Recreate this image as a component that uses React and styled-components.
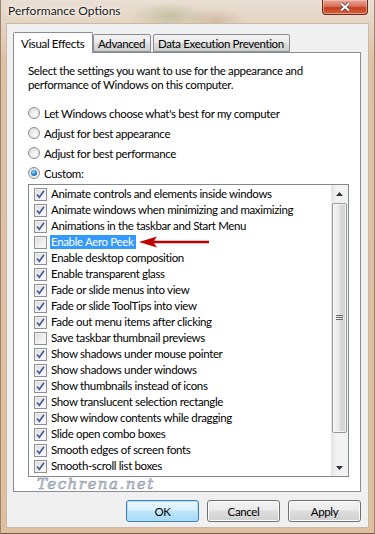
import React from 'react';
import styled, { createGlobalStyle } from 'styled-components';

const GlobalStyle = createGlobalStyle`
  html, body {
    margin: 0;
    padding: 0;
    background: #d8b898;
  }
  body {
    font-family: Lato, "Liberation Sans", sans-serif;
    font-size: 11.5px;
    letter-spacing: -0.35px;
    color: #000;
  }
  * { box-sizing: border-box; }
`;

const Window = styled.div`
  width: 375px;
  height: 534px;
  display: flex;
  flex-direction: column;
  padding: 0 7px 7px 7px;
  background:
    radial-gradient(ellipse 40px 14px at 170px 16px, rgba(120, 140, 80, 0.3), transparent),
    radial-gradient(ellipse 30px 12px at 215px 20px, rgba(150, 110, 70, 0.25), transparent),
    linear-gradient(180deg, #e9dfd3 0px, #e4d4c2 24px, #dfc2a5 60px, #e0bf9f 100%);
  box-shadow: inset 1px 0 0 #9a8470, inset -1px 0 0 #9a8470, inset 0 -1px 0 #6e5a48;
`;

const TitleBar = styled.div`
  height: 24px;
  display: flex;
  align-items: flex-start;
  justify-content: space-between;
`;

const Title = styled.div`
  margin-top: 3px;
  padding-left: 1px;
  font-size: 12px;
  letter-spacing: 0;
  line-height: 16px;
  color: #1a1a1a;
  text-shadow: 0 0 6px #fff, 0 0 3px #fff;
`;

const CloseButton = styled.div`
  width: 46px;
  height: 15px;
  display: flex;
  align-items: center;
  justify-content: center;
  border: 1px solid #6b2c22;
  border-top: none;
  border-radius: 0 0 4px 4px;
  background: linear-gradient(180deg, #e9a898 0%, #d9705a 45%, #c4401f 55%, #d7613e 100%);
  box-shadow: inset 0 0 0 1px rgba(255, 210, 200, 0.5);
`;

const Client = styled.div`
  flex: 1;
  display: flex;
  flex-direction: column;
  background: #f0f0f0;
  padding: 8px 0 0 6px;
  box-shadow: 0 0 0 1px #c9b9a6;
`;

const TabRow = styled.div`
  height: 20px;
  display: flex;
  align-items: flex-end;
  position: relative;
  z-index: 1;
`;

const Tab = styled.div`
  height: ${p => (p.$active ? '21px' : '18px')};
  width: ${p => p.$w}px;
  margin-right: ${p => p.$gap || 0}px;
  margin-bottom: ${p => (p.$active ? '-1px' : '0')};
  padding-top: ${p => (p.$active ? '3px' : '1px')};
  padding-left: ${p => (p.$active ? '7px' : '4px')};
  border: 1px solid #898c95;
  border-bottom: ${p => (p.$active ? 'none' : '1px solid #898c95')};
  border-radius: 2px 2px 0 0;
  background: ${p =>
    p.$active
      ? '#fff'
      : 'linear-gradient(180deg, #f2f2f2 0%, #ebebeb 45%, #dddddd 50%, #cfcfcf 100%)'};
  line-height: 15px;
  white-space: nowrap;
`;

const Panel = styled.div`
  width: 348px;
  height: 440px;
  border: 1px solid #898c95;
  background: #fff;
  display: flex;
  flex-direction: column;
  padding: 11px 0 0 14px;
`;

const Intro = styled.p`
  margin: 0;
  line-height: 14px;
  width: 300px;
`;

const RadioGroup = styled.div`
  margin-top: 11px;
  display: flex;
  flex-direction: column;
`;

const RadioRow = styled.div`
  height: 20px;
  display: flex;
  align-items: center;
  gap: 4px;
`;

const RadioDot = styled.span`
  width: 12px;
  height: 12px;
  border-radius: 50%;
  border: 1px solid #8e8f8f;
  background: radial-gradient(circle at 60% 65%, #fcfcfc 0%, #e6e6e6 55%, #cfcfcf 100%);
  display: flex;
  align-items: center;
  justify-content: center;
  &::after {
    content: '';
    width: 6px;
    height: 6px;
    border-radius: 50%;
    display: ${p => (p.$on ? 'block' : 'none')};
    background: radial-gradient(circle at 40% 35%, #a8dcff 0%, #2d8ad6 45%, #0c4f93 100%);
  }
`;

const ListBox = styled.div`
  margin-top: 1px;
  width: 321px;
  height: 293px;
  border: 1px solid #828790;
  display: flex;
  overflow: hidden;
`;

const Rows = styled.div`
  flex: 1;
  padding: 1px 0 0 5px;
  display: flex;
  flex-direction: column;
`;

const Row = styled.div`
  height: 16px;
  flex-shrink: 0;
  display: flex;
  align-items: center;
`;

const Box = styled.span`
  width: 13px;
  height: 13px;
  border: 1px solid #8e8f8f;
  background: linear-gradient(135deg, #d9d9d9 0%, #f1f1f1 60%, #fcfcfc 100%);
  box-shadow: inset 0 0 0 1px #f4f4f4;
  display: flex;
  align-items: center;
  justify-content: center;
  flex-shrink: 0;
`;

const Label = styled.span`
  margin-left: 3px;
  padding: 0 2px 0 1px;
  height: 14px;
  line-height: 14px;
  white-space: nowrap;
  background: ${p => (p.$selected ? '#3399ff' : 'transparent')};
  color: ${p => (p.$selected ? '#fff' : '#000')};
`;

const Arrow = styled.svg`
  margin-left: 3px;
  flex-shrink: 0;
`;

const ScrollBar = styled.div`
  width: 17px;
  display: flex;
  flex-direction: column;
  background: linear-gradient(90deg, #e3e3e3 0%, #f2f2f2 30%, #f2f2f2 100%);
`;

const ScrollButton = styled.div`
  height: 17px;
  flex-shrink: 0;
  display: flex;
  align-items: center;
  justify-content: center;
`;

const Thumb = styled.div`
  margin: 1px 1px 0 1px;
  height: 230px;
  border: 1px solid #989898;
  border-radius: 2px;
  background: linear-gradient(90deg, #f6f6f6 0%, #e9e9e9 45%, #d9d9d9 55%, #d2d2d2 100%);
  box-shadow: inset 0 0 0 1px rgba(255, 255, 255, 0.7);
  display: flex;
  align-items: center;
  justify-content: center;
`;

const Spacer = styled.div`
  flex: 1;
`;

const Watermark = styled.div`
  margin-left: 9px;
  height: 14px;
  line-height: 14px;
  font-family: "DejaVu Serif", serif;
  font-style: italic;
  font-size: 15px;
  letter-spacing: 1.5px;
  color: #d4d8de;
  -webkit-text-stroke: 0.6px #8b95a5;
`;

const ButtonRow = styled.div`
  margin-top: 8px;
  padding-right: 7px;
  display: flex;
  justify-content: flex-end;
  gap: 8px;
`;

const Button = styled.div`
  width: 73px;
  height: 22px;
  display: flex;
  align-items: center;
  justify-content: center;
  border: 1px solid ${p => (p.$default ? '#3c7fb1' : '#707070')};
  border-radius: 3px;
  background: ${p =>
    p.$default
      ? 'linear-gradient(180deg, #eaf6fd 0%, #d9f0fc 45%, #bee6fd 50%, #a7d9f5 100%)'
      : 'linear-gradient(180deg, #f2f2f2 0%, #ebebeb 45%, #dddddd 50%, #cfcfcf 100%)'};
  box-shadow: inset 0 0 0 1px ${p => (p.$default ? '#b3e0f9' : '#fcfcfc')};
`;

const effects = [
  ['Animate controls and elements inside windows', true],
  ['Animate windows when minimizing and maximizing', true],
  ['Animations in the taskbar and Start Menu', true],
  ['Enable Aero Peek', false, true],
  ['Enable desktop composition', true],
  ['Enable transparent glass', true],
  ['Fade or slide menus into view', true],
  ['Fade or slide ToolTips into view', true],
  ['Fade out menu items after clicking', true],
  ['Save taskbar thumbnail previews', false],
  ['Show shadows under mouse pointer', true],
  ['Show shadows under windows', true],
  ['Show thumbnails instead of icons', true],
  ['Show translucent selection rectangle', true],
  ['Show window contents while dragging', true],
  ['Slide open combo boxes', true],
  ['Smooth edges of screen fonts', true],
  ['Smooth-scroll list boxes', true],
];

const radios = [
  ["Let Windows choose what's best for my computer", false],
  ['Adjust for best appearance', false],
  ['Adjust for best performance', false],
  ['Custom:', true],
];

const Check = () => (
  <svg width="11" height="11" viewBox="0 0 11 11">
    <path d="M2 5.5 L4.3 8.3 L9 1.8" fill="none" stroke="#4a5f97" strokeWidth="1.7" />
  </svg>
);

const App = () => {
  return (
    <Window>
      <GlobalStyle />
      <TitleBar>
        <Title>Performance Options</Title>
        <CloseButton>
          <svg width="12" height="10" viewBox="0 0 12 10">
            <path d="M2 1.5 L10 8.5 M10 1.5 L2 8.5" stroke="#4a3a3a" strokeWidth="3.4" />
            <path d="M2 1.5 L10 8.5 M10 1.5 L2 8.5" stroke="#fff" strokeWidth="2" />
          </svg>
        </CloseButton>
      </TitleBar>
      <Client>
        <TabRow>
          <Tab $active $w={80}>Visual Effects</Tab>
          <Tab $w={58} $gap={2}>Advanced</Tab>
          <Tab $w={137}>Data Execution Prevention</Tab>
        </TabRow>
        <Panel>
          <Intro>
            Select the settings you want to use for the appearance and performance of Windows on this computer.
          </Intro>
          <RadioGroup>
            {radios.map(([text, on]) => (
              <RadioRow key={text}>
                <RadioDot $on={on} />
                <span>{text}</span>
              </RadioRow>
            ))}
          </RadioGroup>
          <ListBox>
            <Rows>
              {effects.map(([text, checked, selected]) => (
                <Row key={text}>
                  <Box>{checked && <Check />}</Box>
                  <Label $selected={selected}>{text}</Label>
                  {selected && (
                    <Arrow width="70" height="12" viewBox="0 0 70 12">
                      <path d="M0 6 L18 0.5 L15 4.8 L70 4.8 L70 7.2 L15 7.2 L18 11.5 Z" fill="#c00000" />
                    </Arrow>
                  )}
                </Row>
              ))}
            </Rows>
            <ScrollBar>
              <ScrollButton>
                <svg width="7" height="4" viewBox="0 0 7 4"><path d="M0 4 L3.5 0 L7 4 Z" fill="#333" /></svg>
              </ScrollButton>
              <Thumb>
                <svg width="7" height="6" viewBox="0 0 7 6">
                  <path d="M0 0.5 H7 M0 2.5 H7 M0 4.5 H7" stroke="#6d6d6d" strokeWidth="1" />
                </svg>
              </Thumb>
              <Spacer />
              <ScrollButton>
                <svg width="7" height="4" viewBox="0 0 7 4"><path d="M0 0 L7 0 L3.5 4 Z" fill="#333" /></svg>
              </ScrollButton>
            </ScrollBar>
          </ListBox>
          <Watermark>Techrena.net</Watermark>
        </Panel>
        <ButtonRow>
          <Button $default>OK</Button>
          <Button>Cancel</Button>
          <Button>Apply</Button>
        </ButtonRow>
      </Client>
    </Window>
  );
};

export default App;
